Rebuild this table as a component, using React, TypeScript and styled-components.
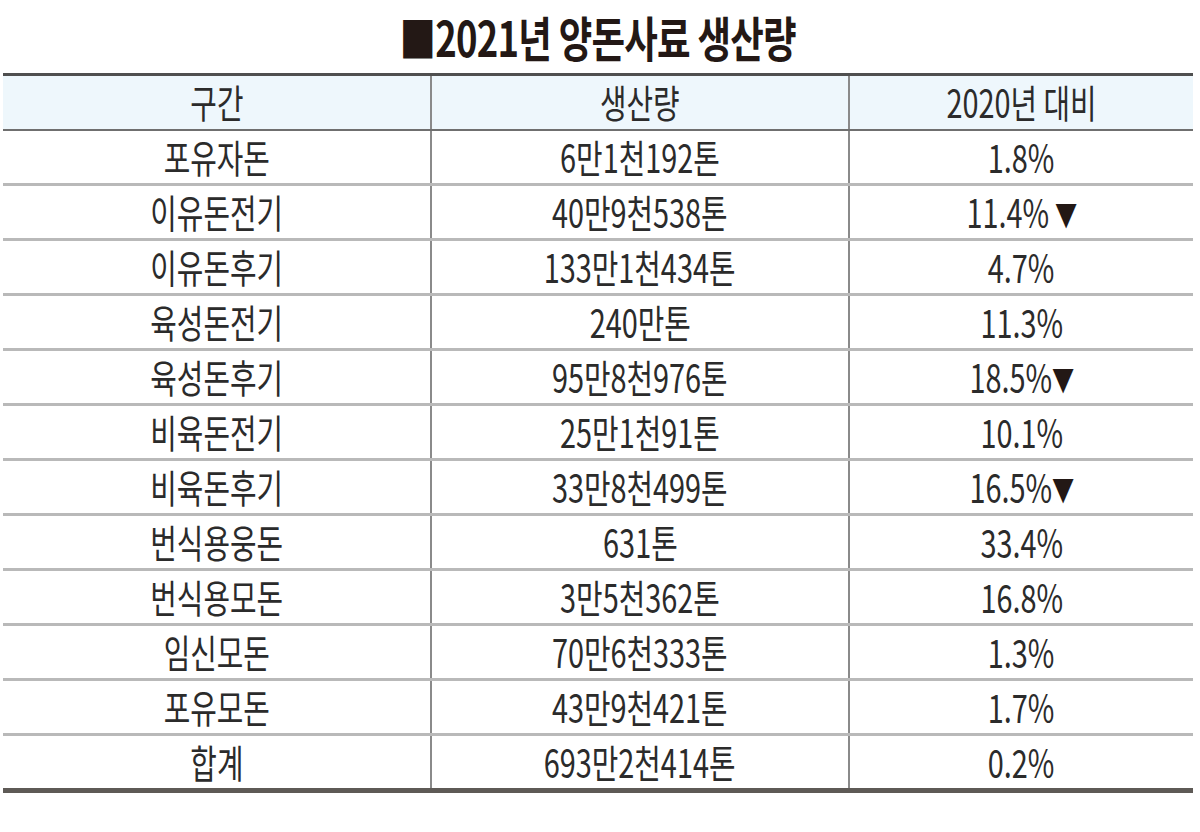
import styled, { createGlobalStyle } from "styled-components";

type Row = { name: string; amount: string; rate: string; down?: "space" | "tight" };

const rows: Row[] = [
  { name: "포유자돈", amount: "6만1천192톤", rate: "1.8%" },
  { name: "이유돈전기", amount: "40만9천538톤", rate: "11.4%", down: "space" },
  { name: "이유돈후기", amount: "133만1천434톤", rate: "4.7%" },
  { name: "육성돈전기", amount: "240만톤", rate: "11.3%" },
  { name: "육성돈후기", amount: "95만8천976톤", rate: "18.5%", down: "tight" },
  { name: "비육돈전기", amount: "25만1천91톤", rate: "10.1%" },
  { name: "비육돈후기", amount: "33만8천499톤", rate: "16.5%", down: "tight" },
  { name: "번식용웅돈", amount: "631톤", rate: "33.4%" },
  { name: "번식용모돈", amount: "3만5천362톤", rate: "16.8%" },
  { name: "임신모돈", amount: "70만6천333톤", rate: "1.3%" },
  { name: "포유모돈", amount: "43만9천421톤", rate: "1.7%" },
  { name: "합계", amount: "693만2천414톤", rate: "0.2%" },
];

export default function App() {
  return (
    <>
      <GlobalStyle />
      <Page>
        <Title>
          <TitleText>■2021년 양돈사료 생산량</TitleText>
        </Title>
        <Table>
          <colgroup>
            <col style={{ width: 428 }} />
            <col style={{ width: 418 }} />
            <col />
          </colgroup>
          <thead>
            <tr>
              <HeadCell>
                <Squeeze>구간</Squeeze>
              </HeadCell>
              <HeadCell>
                <Squeeze>생산량</Squeeze>
              </HeadCell>
              <HeadCell>
                <Squeeze>2020년 대비</Squeeze>
              </HeadCell>
            </tr>
          </thead>
          <tbody>
            {rows.map((r) => (
              <BodyRow key={r.name}>
                <Cell>
                  <Squeeze>{r.name}</Squeeze>
                </Cell>
                <Cell>
                  <Squeeze>{r.amount}</Squeeze>
                </Cell>
                <Cell>
                  <Squeeze>
                    {r.rate}
                    {r.down && <Down $gap={r.down === "space"}>▼</Down>}
                  </Squeeze>
                </Cell>
              </BodyRow>
            ))}
          </tbody>
        </Table>
      </Page>
    </>
  );
}

const GlobalStyle = createGlobalStyle`
  html, body {
    margin: 0;
    padding: 0;
    background: #ffffff;
  }
  body {
    font-family: "Noto Sans CJK KR", "Noto Sans", sans-serif;
    color: #2b2b2b;
  }
`;

const Page = styled.div`
  width: 1200px;
  padding: 0 7px 0 3px;
  box-sizing: border-box;
`;

const Title = styled.div`
  height: 73px;
  display: flex;
  align-items: center;
  justify-content: center;
  padding-bottom: 2px;
  box-sizing: border-box;
`;

const TitleText = styled.span`
  display: inline-block;
  font-size: 48px;
  font-weight: 700;
  color: #231815;
  line-height: 1;
  white-space: nowrap;
  letter-spacing: -1px;
  transform: scaleX(0.76);
`;

const Table = styled.table`
  width: 1190px;
  border-collapse: collapse;
  table-layout: fixed;
  border-top: 3px solid #4f4f4f;
  border-bottom: 5px solid #5e5a56;
`;

const HeadCell = styled.th`
  height: 53px;
  padding: 0;
  background: #eef7fc;
  font-weight: 400;
  text-align: center;
  border-bottom: 2px solid #6f6f6f;
  border-left: 2px solid #8a8a8a;

  &:first-child {
    border-left: none;
  }
`;

const BodyRow = styled.tr`
  & + & td {
    border-top: 3px solid #b9b9b9;
  }
`;

const Cell = styled.td`
  height: 52px;
  padding: 0;
  text-align: center;
  border-left: 2px solid #8a8a8a;

  &:first-child {
    border-left: none;
  }
`;

const Squeeze = styled.span`
  display: inline-block;
  font-size: 39px;
  font-weight: 400;
  line-height: 1;
  white-space: nowrap;
  transform: scaleX(0.74);
`;

const Down = styled.span<{ $gap: boolean }>`
  color: #231815;
  font-size: 30px;
  margin-left: ${(p) => (p.$gap ? "8px" : "0")};
  vertical-align: 2px;
`;
